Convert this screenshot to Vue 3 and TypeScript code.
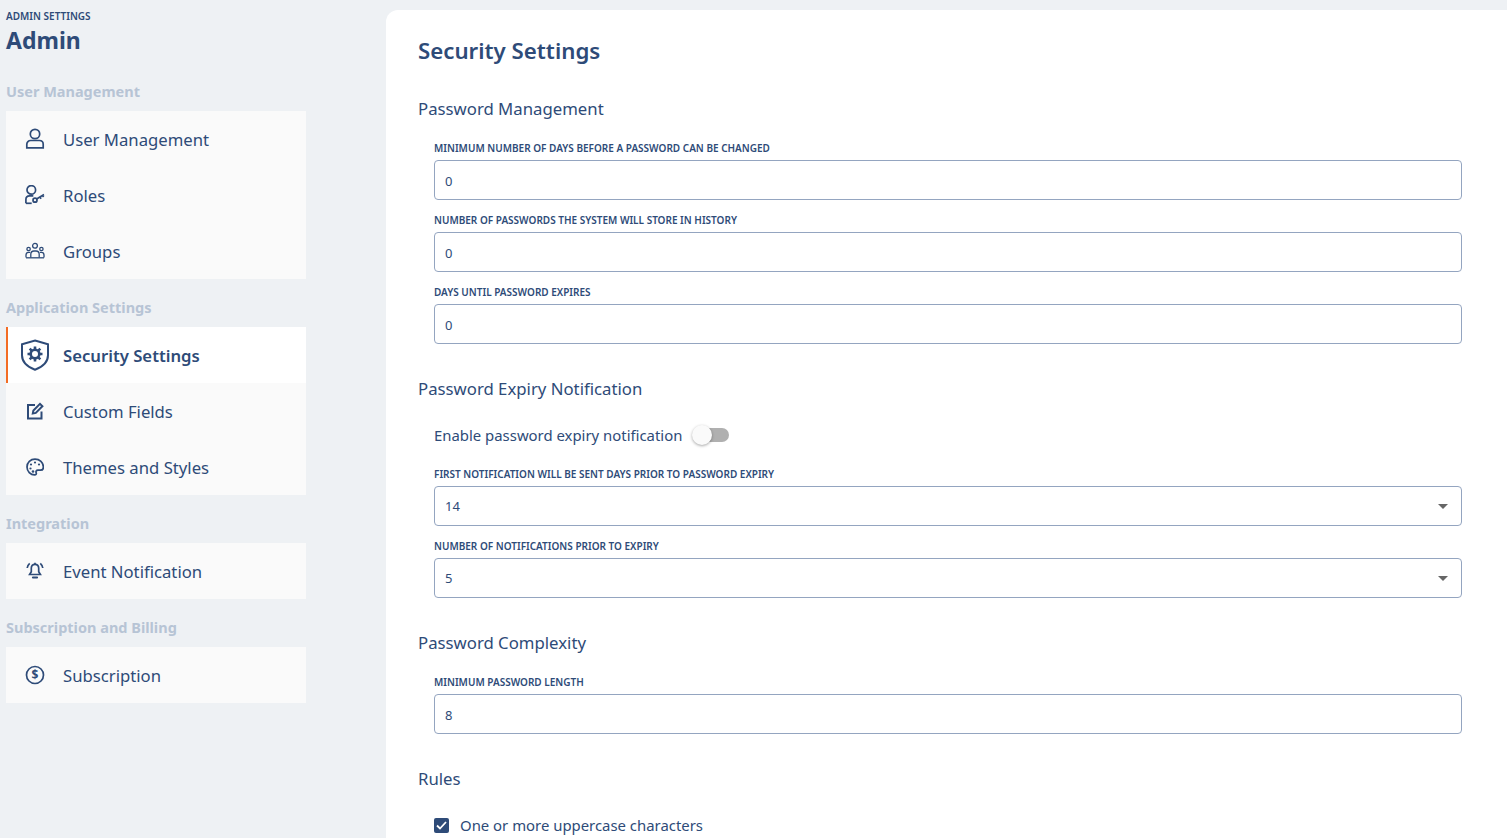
<script setup lang="ts">
interface NavItem { label: string; icon: string; active?: boolean }
interface NavGroup { title: string; items: NavItem[] }

const groups: NavGroup[] = [
  { title: 'User Management', items: [
    { label: 'User Management', icon: 'user' },
    { label: 'Roles', icon: 'roles' },
    { label: 'Groups', icon: 'groups' },
  ] },
  { title: 'Application Settings', items: [
    { label: 'Security Settings', icon: 'shield', active: true },
    { label: 'Custom Fields', icon: 'edit' },
    { label: 'Themes and Styles', icon: 'palette' },
  ] },
  { title: 'Integration', items: [{ label: 'Event Notification', icon: 'bell' }] },
  { title: 'Subscription and Billing', items: [{ label: 'Subscription', icon: 'dollar' }] },
]
</script>

<template>
  <div class="page">
    <aside class="sidebar">
      <div class="eyebrow">ADMIN SETTINGS</div>
      <div class="admin">Admin</div>
      <section v-for="g in groups" :key="g.title" class="group">
        <div class="group-title">{{ g.title }}</div>
        <div class="card">
          <a v-for="it in g.items" :key="it.label" class="item" :class="{ active: it.active }">
            <span class="icon-box">
              <svg v-if="it.icon === 'user'" width="20" height="22" viewBox="0 0 20 22" class="ic">
                <circle cx="10" cy="6" r="4.700" />
                <path d="M1.800 19.800v-3.600c0-2.200 1.700-3.700 3.800-3.700h8.800c2.100 0 3.800 1.500 3.800 3.700v3.600z" />
              </svg>
              <svg v-else-if="it.icon === 'roles'" width="20" height="20" viewBox="0 0 20 20" class="ic">
                <circle cx="6.300" cy="4.900" r="4.300" />
                <path d="M.9 18.300v-3.800c0-2.300 1.400-3.700 3.600-3.700h3.800" />
                <path d="M.9 18.300h5.800" />
                <circle cx="10" cy="15.200" r="2" />
                <path d="M11.600 14l7.400-4.400M15 12l1.100 1.700M17.600 10.500l1 1.500" />
              </svg>
              <svg v-else-if="it.icon === 'groups'" width="20" height="18" viewBox="0 0 20 18" class="ic thin">
                <circle cx="10" cy="3.800" r="2.400" />
                <circle cx="3.600" cy="7" r="1.700" />
                <circle cx="16.400" cy="7" r="1.700" />
                <path d="M5.800 15.500v-3.200c0-2 1.400-3.300 3.200-3.300h2c1.800 0 3.200 1.300 3.200 3.300v3.200" />
                <path d="M1 15.500v-2.500c0-1.600 1-2.700 2.600-2.700h1.500M19 15.500v-2.500c0-1.600-1-2.700-2.600-2.700h-1.500" />
                <path d="M1 15.800h18" />
              </svg>
              <svg v-else-if="it.icon === 'shield'" width="30" height="32" viewBox="0 0 30 32" class="ic bold">
                <path d="M15 1.500l13 3.700v11c0 6.500-5 11.500-13 14.500-8-3-13-8-13-14.500v-11z" />
                <circle class="gear" cx="15" cy="15" r="4.300" />
                <path class="gear" d="M15 7.500v3M15 19.500v3M7.500 15h3M19.500 15h3M9.700 9.700l2 2M18.300 18.300l2 2M20.300 9.700l-2 2M11.700 18.300l-2 2" />
              </svg>
              <svg v-else-if="it.icon === 'edit'" width="18" height="18" viewBox="0 0 18 18" class="ic bold">
                <path d="M9 3H2v13.500h13.500V9.500" />
                <path d="M6.800 11.500l.6-3L14 1.800l2.400 2.400-6.600 6.700z" />
              </svg>
              <svg v-else-if="it.icon === 'palette'" width="18" height="18" viewBox="0 0 18 18" class="ic">
                <path d="M9 1.200c-4.500 0-8 3.400-8 7.800s3.500 7.800 7.600 7.800c1.500 0 2-1 1.600-2-.6-1.400.1-2.600 1.700-2.600h2.600c1.700 0 2.900-1.200 2.900-3.100 0-4.500-3.800-7.900-8.400-7.900z" />
                <circle class="dot" cx="5" cy="6.500" r="1.100" />
                <circle class="dot" cx="9" cy="4.500" r="1.100" />
                <circle class="dot" cx="13" cy="6.500" r="1.100" />
                <circle class="dot" cx="4.500" cy="10.500" r="1.100" />
                <circle class="dot" cx="7" cy="13.500" r="1.300" />
              </svg>
              <svg v-else-if="it.icon === 'bell'" width="20" height="20" viewBox="0 0 20 20" class="ic">
                <path d="M10 3.300c-2.300 0-3.700 1.800-3.700 4v3.400l-1.700 2.800h10.800l-1.700-2.800V7.300c0-2.200-1.400-4-3.700-4z" />
                <path d="M10 1.800v1.500" />
                <path d="M8 16.500h4" class="heavy" />
                <path d="M2.200 7c.2-1.900 1-3.400 2.500-4.700M17.800 7c-.2-1.900-1-3.400-2.500-4.700" />
              </svg>
              <svg v-else width="20" height="20" viewBox="0 0 20 20" class="ic">
                <circle cx="10" cy="10" r="8.500" />
                <text x="10" y="14" text-anchor="middle" class="dollar">$</text>
              </svg>
            </span>
            <span class="item-label">{{ it.label }}</span>
          </a>
        </div>
      </section>
    </aside>

    <main class="main">
      <h1>Security Settings</h1>

      <h2>Password Management</h2>
      <div class="field">
        <label>MINIMUM NUMBER OF DAYS BEFORE A PASSWORD CAN BE CHANGED</label>
        <input value="0" />
      </div>
      <div class="field">
        <label>NUMBER OF PASSWORDS THE SYSTEM WILL STORE IN HISTORY</label>
        <input value="0" />
      </div>
      <div class="field">
        <label>DAYS UNTIL PASSWORD EXPIRES</label>
        <input value="0" />
      </div>

      <h2>Password Expiry Notification</h2>
      <div class="toggle-row">
        <span>Enable password expiry notification</span>
        <span class="toggle"><span class="knob"></span></span>
      </div>
      <div class="field">
        <label>FIRST NOTIFICATION WILL BE SENT DAYS PRIOR TO PASSWORD EXPIRY</label>
        <div class="select">14<span class="caret"></span></div>
      </div>
      <div class="field">
        <label>NUMBER OF NOTIFICATIONS PRIOR TO EXPIRY</label>
        <div class="select">5<span class="caret"></span></div>
      </div>

      <h2>Password Complexity</h2>
      <div class="field">
        <label>MINIMUM PASSWORD LENGTH</label>
        <input value="8" />
      </div>

      <h2>Rules</h2>
      <div class="check-row">
        <span class="check">
          <svg width="11" height="9" viewBox="0 0 11 9"><path d="M1 4.500l3 3 6-6.500" /></svg>
        </span>
        <span>One or more uppercase characters</span>
      </div>
    </main>
  </div>
</template>

<style>
html, body { margin: 0; height: 100%; overflow: hidden; }
</style>

<style scoped>
.page {
  display: flex;
  width: 1507px;
  height: 838px;
  overflow: hidden;
  background: #eef1f4;
  color: #2e4b78;
  font-family: "Noto Sans", "Open Sans", sans-serif;
}
.sidebar {
  width: 386px;
  flex: none;
  box-sizing: border-box;
  padding: 10px 0 0 6px;
}
.eyebrow {
  font-size: 10px;
  font-weight: 600;
  line-height: 13px;
  color: #2e4b78;
}
.admin {
  font-size: 23px;
  font-weight: 700;
  line-height: 34px;
  margin-bottom: 24px;
}
.group { width: 300px; }
.group-title {
  font-size: 14.500px;
  font-weight: 700;
  line-height: 20px;
  color: #b7c4d5;
  margin-bottom: 10px;
}
.group + .group { margin-top: 18px; }
.card { background: #fafafa; }
.item {
  display: flex;
  align-items: center;
  height: 56px;
  box-sizing: border-box;
  font-size: 16.700px;
}
.item.active {
  background: #fff;
  border-left: 2px solid #f36c24;
  font-weight: 600;
}
.icon-box {
  width: 57px;
  flex: none;
  display: flex;
  justify-content: center;
}
.item.active .icon-box { width: 54px; margin-right: 1px; }
.item-label { line-height: 24px; padding-top: 1px; }
.ic { fill: none; stroke: #2e4b78; stroke-width: 1.700; }
.ic.thin { stroke-width: 1.300; }
.ic.bold { stroke-width: 2; }
.ic .gear { stroke-width: 2.600; }
.ic .dot { fill: #2e4b78; stroke: none; }
.ic .heavy { stroke-width: 2.200; stroke-linecap: round; }
.ic .dollar {
  fill: #2e4b78;
  stroke: none;
  font-size: 12px;
  font-weight: 700;
  font-family: "Noto Sans", sans-serif;
}
.main {
  flex: 1;
  box-sizing: border-box;
  margin-top: 10px;
  padding: 26px 45px 0 32px;
  background: #fff;
  border-top-left-radius: 12px;
  overflow: hidden;
}
h1 {
  margin: 0 0 31px;
  font-size: 22.250px;
  font-weight: 600;
  line-height: 30px;
}
h2 {
  margin: 33px 0 19px;
  font-size: 16.750px;
  font-weight: 400;
  line-height: 24px;
}
h1 + h2 { margin-top: 0; }
.field { margin: 0 0 12px 16px; }
.field label {
  display: block;
  font-size: 10px;
  font-weight: 600;
  line-height: 16px;
  margin-bottom: 4px;
}
.field input, .select {
  display: block;
  position: relative;
  width: 100%;
  height: 40px;
  box-sizing: border-box;
  padding: 1px 10px 0;
  border: 1px solid #94a5c0;
  border-radius: 4px;
  background: #fff;
  color: #2e4b78;
  font-family: inherit;
  font-size: 13px;
  line-height: 37px;
  outline: none;
}
.caret {
  position: absolute;
  right: 13px;
  top: 17px;
  border-left: 5px solid transparent;
  border-right: 5px solid transparent;
  border-top: 5px solid #666;
}
.toggle-row, .check-row {
  display: flex;
  align-items: center;
  height: 24px;
  margin: 22px 0 19px 16px;
  font-size: 14.900px;
}
h2 + .toggle-row, h2 + .check-row { margin-top: 22px; }
.toggle {
  position: relative;
  width: 34px;
  height: 14px;
  margin-left: 13px;
  border-radius: 7px;
  background: #b0b0b0;
}
.knob {
  position: absolute;
  left: -3px;
  top: -3px;
  width: 20px;
  height: 20px;
  border-radius: 50%;
  background: #fafafa;
  box-shadow: 0 1px 3px rgba(0, 0, 0, .35);
}
.check {
  width: 15px;
  height: 15px;
  margin-right: 11px;
  border-radius: 2px;
  background: #2e4b78;
  display: flex;
  align-items: center;
  justify-content: center;
}
.check svg { fill: none; stroke: #fff; stroke-width: 1.800; }
</style>
